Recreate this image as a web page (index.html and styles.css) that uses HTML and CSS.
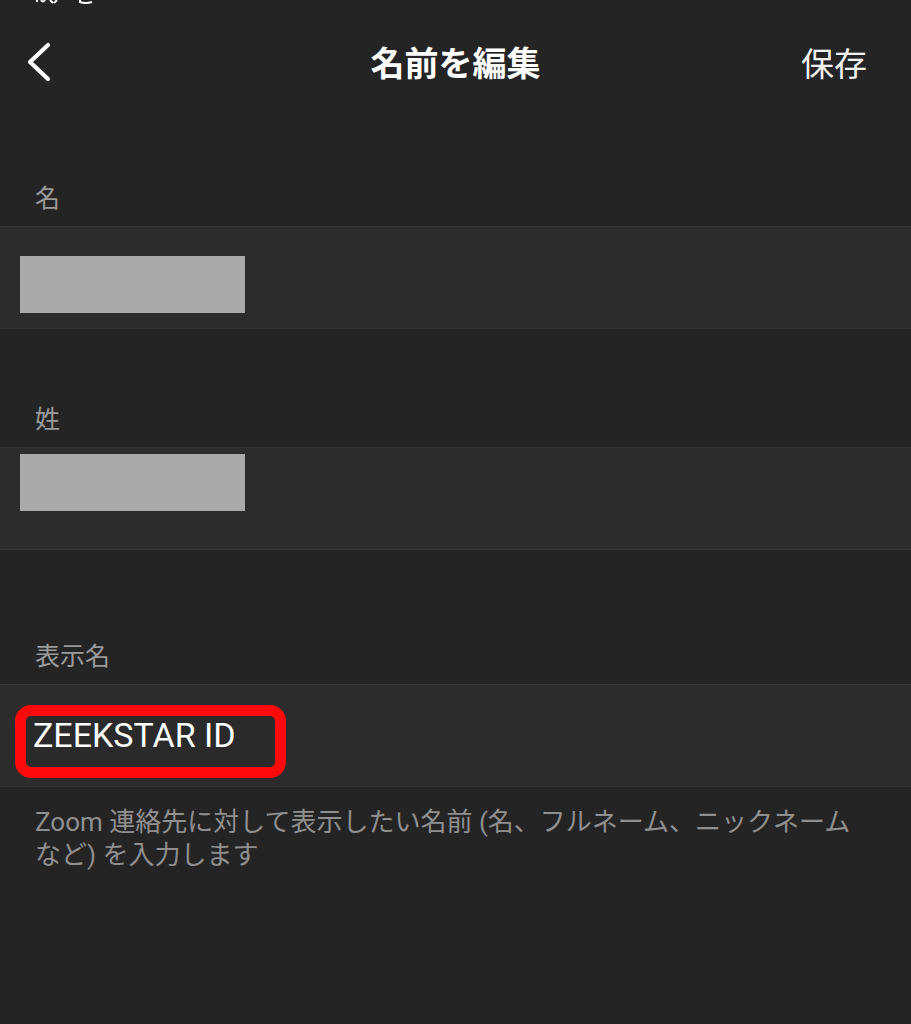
FILE: index.html
```html
<!DOCTYPE html>
<html lang="ja">
<head>
<meta charset="utf-8">
<title>名前を編集</title>
<link rel="stylesheet" href="styles.css">
</head>
<body>
<div class="status">
  <svg width="120" height="4" viewBox="0 0 120 4"><path d="M37 0v2M41 0q2 3 4 0M50 0l3 3M57 0l-3 3M80 0v2q5 2 12 0" stroke="#fff" stroke-width="2" fill="none"/></svg>
</div>
<header class="nav">
  <div class="nav-left">
    <svg class="back" width="26" height="40" viewBox="0 0 26 40"><path d="M22 3 L4 20 L22 37" stroke="#fff" stroke-width="4.2" stroke-linecap="round" stroke-linejoin="round" fill="none"/></svg>
  </div>
  <h1 class="nav-title">名前を編集</h1>
  <div class="nav-right">保存</div>
</header>

<section class="group group-first">
  <div class="label">名</div>
  <div class="row row-first">
    <div class="redact"></div>
  </div>
</section>

<section class="group group-second">
  <div class="label">姓</div>
  <div class="row row-second">
    <div class="redact"></div>
  </div>
</section>

<section class="group group-third">
  <div class="label">表示名</div>
  <div class="row row-third">
    <span class="highlight">ZEEKSTAR ID</span>
  </div>
  <p class="desc">Zoom 連絡先に対して表示したい名前 (名、フルネーム、ニックネームなど) を入力します</p>
</section>
</body>
</html>
```

FILE: styles.css
```css
html, body {
  margin: 0;
  padding: 0;
  background: #242424;
}
body {
  width: 911px;
  min-height: 1024px;
  font-family: "Roboto", "Noto Sans CJK JP", sans-serif;
  color: #fff;
}
.status {
  height: 4px;
  overflow: hidden;
}
.status svg {
  display: block;
}
.nav {
  height: 116px;
  display: grid;
  grid-template-columns: 1fr auto 1fr;
  align-items: center;
}
.nav-left {
  padding-left: 26px;
  display: flex;
  align-items: center;
}
.back {
  display: block;
}
.nav-title {
  margin: 0;
  font-family: "Noto Sans CJK JP", sans-serif;
  font-weight: 700;
  font-size: 34px;
  line-height: 40px;
  color: #fff;
}
.nav-right {
  justify-self: end;
  padding-right: 44px;
  font-family: "Noto Sans CJK JP", sans-serif;
  font-size: 33px;
  line-height: 40px;
  color: #f2f2f2;
}
.group-first {
  margin-top: 59px;
}
.group-second {
  margin-top: 71px;
}
.group-third {
  margin-top: 87px;
}
.label {
  padding: 0 0 13px 35px;
  font-family: "Noto Sans CJK JP", sans-serif;
  font-size: 25px;
  line-height: 34px;
  color: #9a9a9a;
}
.row {
  box-sizing: border-box;
  height: 103px;
  background: #2c2c2c;
  border-top: 1px solid #363636;
  border-bottom: 1px solid #323232;
  padding-left: 20px;
}
.row-first {
  padding-top: 29px;
}
.row-second {
  padding-top: 6px;
}
.row-third {
  padding-top: 20px;
  padding-left: 15px;
}
.redact {
  width: 225px;
  height: 57px;
  background: #a9a9a9;
}
.highlight {
  display: inline-block;
  box-sizing: border-box;
  width: 271px;
  height: 73px;
  border: 11px solid #ff0a0a;
  border-radius: 16px;
  background: #2a2a2a;
  padding: 2px 0 0 7px;
  font-family: "Roboto", sans-serif;
  font-size: 34px;
  line-height: 34px;
  color: #fff;
}
.desc {
  margin: 19px 0 0;
  padding: 0 40px 0 35px;
  font-size: 26px;
  line-height: 33px;
  color: #8f8f8f;
}
```
